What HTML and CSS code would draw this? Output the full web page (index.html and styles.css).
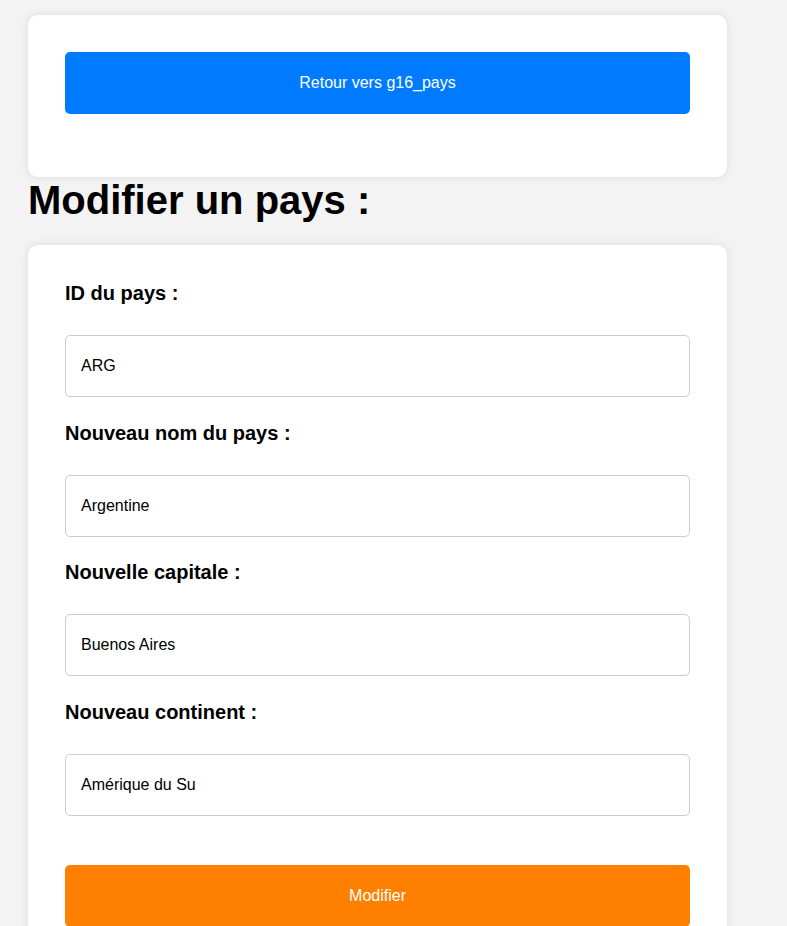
FILE: index.html
```html
<!DOCTYPE html>
<html lang="fr">
<head>
<meta charset="utf-8">
<title>Modifier un pays</title>
<link rel="stylesheet" href="styles.css">
</head>
<body>
<div class="card card-top">
  <a class="btn btn-blue" href="#">Retour vers g16_pays</a>
</div>
<h1 class="title">Modifier un pays :</h1>
<form class="card card-form">
  <label class="field-label" for="id">ID du pays :</label>
  <input class="field-input" id="id" type="text" value="ARG">
  <label class="field-label" for="nom">Nouveau nom du pays :</label>
  <input class="field-input" id="nom" type="text" value="Argentine">
  <label class="field-label" for="cap">Nouvelle capitale :</label>
  <input class="field-input" id="cap" type="text" value="Buenos Aires">
  <label class="field-label" for="cont">Nouveau continent :</label>
  <input class="field-input" id="cont" type="text" value="Amérique du Su">
  <button class="btn btn-orange" type="submit">Modifier</button>
</form>
</body>
</html>
```

FILE: styles.css
```css
html, body {
  margin: 0;
  background: #f3f3f3;
}
body {
  padding: 15px 28px 0 28px;
  font-family: "Liberation Sans", Arial, sans-serif;
  color: #000;
}
.card {
  box-sizing: border-box;
  width: 699px;
  background: #fff;
  border-radius: 10px;
  box-shadow: 0 0 10px rgba(0, 0, 0, 0.1);
  padding: 37px;
}
.card-top {
  padding-bottom: 63px;
}
.btn {
  display: flex;
  align-items: center;
  justify-content: center;
  box-sizing: border-box;
  width: 100%;
  height: 62px;
  border: none;
  border-radius: 5px;
  color: #fff;
  font-family: "Liberation Sans", Arial, sans-serif;
  font-size: 16px;
  text-decoration: none;
}
.btn-blue {
  background: #007bff;
}
.btn-orange {
  background: #ff8000;
  margin-top: 24.33px;
}
.title {
  margin: 0 0 22px 0;
  font-size: 40px;
  font-weight: bold;
  line-height: 46px;
}
.card-form {
  display: flex;
  flex-direction: column;
}
.field-label {
  display: block;
  font-size: 20px;
  font-weight: bold;
  line-height: 23px;
  margin-bottom: 30px;
}
.field-input {
  box-sizing: border-box;
  width: 100%;
  height: 62px;
  margin: 0 0 24.67px 0;
  padding: 0 15px;
  border: 1px solid #ccc;
  border-radius: 5px;
  font-family: "Liberation Sans", Arial, sans-serif;
  font-size: 16px;
  color: #000;
  background: #fff;
}
```
